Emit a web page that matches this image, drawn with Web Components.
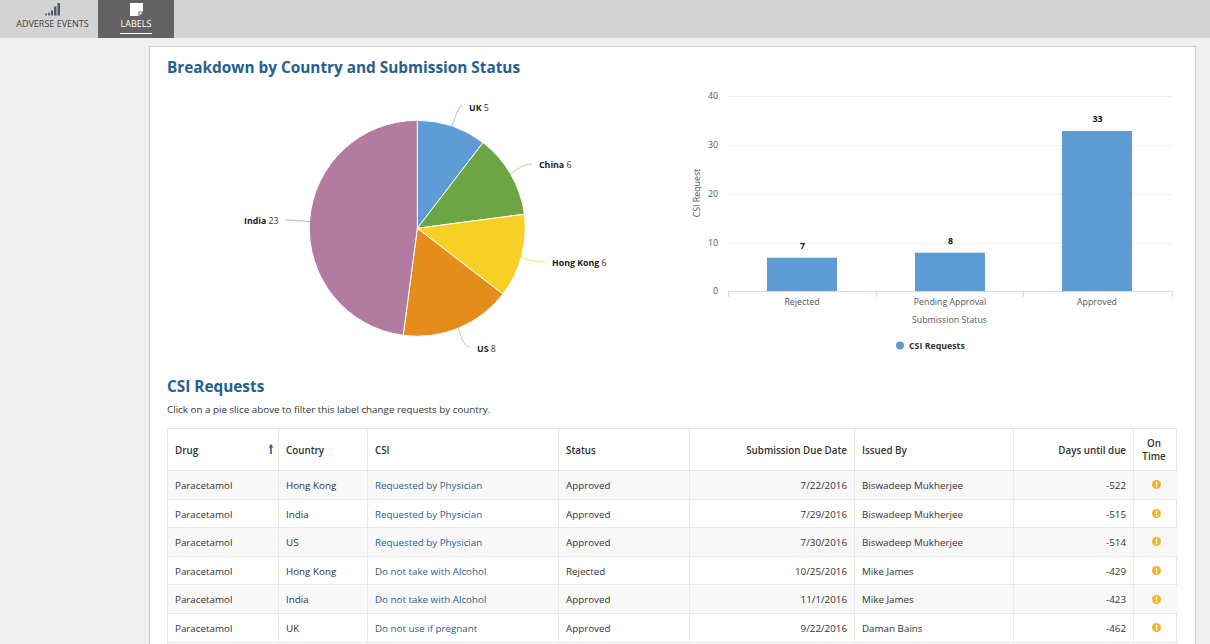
<!DOCTYPE html>
<html>
<head>
<meta charset="utf-8">
<title>CSI Requests</title>
<style>
  html, body { margin: 0; height: 644px; overflow: hidden; }
  body { background: #efefef; font-family: "Open Sans", "Liberation Sans", sans-serif; color: #333; }
</style>
</head>
<body>
<app-shell>
  <top-nav slot="nav">
    <nav-tab label="ADVERSE EVENTS" icon="bars" style="width:98px;padding-left:7px"></nav-tab>
    <nav-tab label="LABELS" icon="note" active style="width:76px"></nav-tab>
  </top-nav>
  <report-card>
    <section-title>Breakdown by Country and Submission Status</section-title>
    <chart-row>
      <pie-chart></pie-chart>
      <bar-chart></bar-chart>
    </chart-row>
    <section-title>CSI Requests</section-title>
    <p-note>Click on a pie slice above to filter this label change requests by country.</p-note>
    <csi-table></csi-table>
  </report-card>
</app-shell>

<script>
// --- tiny helper: every element gets an open shadow root with the given html ---
class Base extends HTMLElement {
  constructor() {
    super();
    this.attachShadow({ mode: 'open' });
  }
  connectedCallback() {
    this.shadowRoot.innerHTML = this.render();
  }
}

class AppShell extends Base {
  render() {
    return `<style>
      :host { display: block; }
      main { margin: 8px 14px 0 149px; }
    </style>
    <slot name="nav"></slot>
    <main><slot></slot></main>`;
  }
}

class TopNav extends Base {
  render() {
    return `<style>
      :host { display: flex; height: 38px; background: #d3d3d3; }
    </style><slot></slot>`;
  }
}

class NavTab extends Base {
  render() {
    const active = this.hasAttribute('active');
    const icons = {
      bars: `<svg width="15" height="13" viewBox="0 0 15 13">
        <rect x="0" y="10.500" width="2" height="2" fill="#666"/>
        <rect x="3" y="9.500" width="2" height="3" fill="#666"/>
        <rect x="6" y="7.500" width="2" height="5" fill="#555"/>
        <rect x="9" y="3.500" width="2.500" height="9" fill="#4a5a6a"/>
        <rect x="12.500" y="0" width="2.500" height="12.500" fill="#4a5a6a"/>
      </svg>`,
      note: `<svg width="13" height="13" viewBox="0 0 13 13">
        <path d="M0 0H13V8.500H8.500V13H0Z" fill="#fff"/>
        <path d="M9.500 12.500V9.500H12.500Z" fill="#fff"/>
      </svg>`
    };
    return `<style>
      :host { display: flex; flex-direction: column; align-items: center; height: 38px; box-sizing: border-box;
        background: ${active ? '#636363' : 'transparent'}; color: ${active ? '#fff' : '#444'}; }
      .ico { height: 13px; padding-top: 3px; display: flex; justify-content: center; }
      .lbl { display: block; font-size: 9px; line-height: 12px; margin-top: 2px; padding: 0 0 3px;
        ${active ? 'border-bottom: 1px solid #fff; padding-left: 1px; padding-right: 1px;' : ''} }
    </style>
    <div class="ico">${icons[this.getAttribute('icon')]}</div>
    <span class="lbl">${this.getAttribute('label')}</span>`;
  }
}

class ReportCard extends Base {
  render() {
    return `<style>
      :host { display: block; box-sizing: border-box; background: #fff; border: 1px solid #ccc; border-bottom: 0;
        padding: 9px 18px 0 17px; height: 598px; overflow: hidden; }
    </style><slot></slot>`;
  }
}

class SectionTitle extends Base {
  render() {
    return `<style>
      :host { display: block; font-size: 15.350px; line-height: 22px; font-weight: 700; color: #24608f; }
    </style><slot></slot>`;
  }
}

class PNote extends Base {
  render() {
    return `<style>
      :host { display: block; font-size: 9.800px; line-height: 14px; margin: 6px 0 11px; color: #333; }
    </style><slot></slot>`;
  }
}

class ChartRow extends Base {
  render() {
    return `<style>
      :host { display: flex; height: 295px; margin-top: 2px; justify-content: space-between; }
    </style><slot></slot>`;
  }
}

// Pie: origin of the svg sits at page (167,80)
class PieChart extends Base {
  render() {
    const cx = 250.3, cy = 148.3, r = 108;
    const slices = [
      { v: 5, c: '#5f9bd5' }, { v: 6, c: '#6ca644' }, { v: 6, c: '#f6d024' },
      { v: 8, c: '#e48d1a' }, { v: 23, c: '#b47ba2' }
    ];
    const total = slices.reduce((s, x) => s + x.v, 0);
    let a = -Math.PI / 2;
    const paths = slices.map(s => {
      const b = a + s.v / total * Math.PI * 2;
      const large = b - a > Math.PI ? 1 : 0;
      const d = `M${cx} ${cy}L${cx + r * Math.cos(a)} ${cy + r * Math.sin(a)}A${r} ${r} 0 ${large} 1 ${cx + r * Math.cos(b)} ${cy + r * Math.sin(b)}Z`;
      a = b;
      return `<path d="${d}" fill="${s.c}" stroke="#fff" stroke-width="1"/>`;
    }).join('');
    const labels = [
      ['UK', 5, 302, 31, 'M284.700 46C288 40 289 31 295 25', '#9dbfe0'],
      ['China', 6, 372, 88, 'M343 94C350 90 356 84 365 84', '#b5cfa0'],
      ['Hong Kong', 6, 385, 186, 'M353.700 177.700C362 180 370 182 378 182.300', '#f5dd7a'],
      ['US', 8, 310, 272, 'M291.300 248.300C294 256 296 266 303 267.300', '#ecc08a'],
      ['India', 23, 77, 144, 'M143 141.700C134 141 126 140 118 140', '#c9a9bf']
    ].map(([n, v, x, y, d, c]) => `<path d="${d}" fill="none" stroke="${c}"/>
      <text x="${x}" y="${y}"><tspan font-weight="700" fill="#222">${n}</tspan> ${v}</text>`).join('');
    return `<style>
      :host { display: block; width: 500px; height: 286px; }
      svg { display: block; font-family: "Open Sans", sans-serif; font-size: 8.800px; fill: #333; }
    </style>
    <svg width="500" height="286" viewBox="0 0 500 286">${paths}${labels}</svg>`;
  }
}

// Bars: origin of the svg sits at page (680,80)
class BarChart extends Base {
  render() {
    const x0 = 48, x1 = 492;
    const ticks = [[40, 16], [30, 65], [20, 114], [10, 163], [0, 211]];
    const grid = ticks.map(([t, y]) => `
      <line x1="${x0}" x2="${x1}" y1="${y + .5}" y2="${y + .5}" stroke="${t ? '#eef0f3' : '#d5dbe6'}"/>
      <text x="38" y="${y + 3}" text-anchor="end">${t}</text>`).join('');
    const cats = [
      ['Rejected', 122, 87, 70, 177.700, 7],
      ['Pending Approval', 270, 235, 70, 172.700, 8],
      ['Approved', 417, 382, 70, 51, 33]
    ];
    const bars = cats.map(([n, c, x, w, top, v]) => `
      <rect x="${x}" y="${top}" width="${w}" height="${211 - top}" fill="#5f9bd5"/>
      <text x="${c}" y="225" text-anchor="middle">${n}</text>
      <text x="${c + .5}" y="${top - 9}" text-anchor="middle" font-weight="700" fill="#111">${v}</text>`).join('');
    const tk = [48, 196, 343, 492].map(x => `<line x1="${x + .5}" x2="${x + .5}" y1="212" y2="217" stroke="#d5dbe6"/>`).join('');
    return `<style>
      :host { display: block; width: 498px; height: 286px; margin-right: -1px; }
      svg { display: block; font-family: "Open Sans", sans-serif; font-size: 8.800px; fill: #555; }
    </style>
    <svg width="498" height="286" viewBox="0 0 498 286">
      ${grid}${tk}${bars}
      <text x="269.500" y="243" text-anchor="middle">Submission Status</text>
      <text transform="translate(20 113) rotate(-90)" text-anchor="middle">CSI Request</text>
      <circle cx="220" cy="265.500" r="4" fill="#5f9bd5"/>
      <text x="229" y="269" font-weight="700" fill="#333">CSI Requests</text>
    </svg>`;
  }
}

class AlertDot extends Base {
  render() {
    return `<style>
      :host { display: inline-block; width: 9px; height: 9px; }
      svg { display: block; }
    </style>
    <svg width="9" height="9" viewBox="0 0 9 9">
      <circle cx="4.500" cy="4.500" r="4.500" fill="#f0b429"/>
      <rect x="3.800" y="1.700" width="1.400" height="3.600" fill="#fff"/>
      <rect x="3.800" y="6" width="1.400" height="1.300" fill="#fff"/>
    </svg>`;
  }
}

class CsiTable extends Base {
  render() {
    const widths = [111, 89, 191, 131, 165, 159, 120, 44];
    const heads = [['Drug'], ['Country'], ['CSI'], ['Status'], ['Submission Due Date', 'r'], ['Issued By'], ['Days until due', 'r'], ['On Time', 'c']];
    const rows = [
      ['Paracetamol', 'Hong Kong', 'Requested by Physician', 'Approved', '7/22/2016', 'Biswadeep Mukherjee', '-522'],
      ['Paracetamol', 'India', 'Requested by Physician', 'Approved', '7/29/2016', 'Biswadeep Mukherjee', '-515'],
      ['Paracetamol', 'US', 'Requested by Physician', 'Approved', '7/30/2016', 'Biswadeep Mukherjee', '-514'],
      ['Paracetamol', 'Hong Kong', 'Do not take with Alcohol', 'Rejected', '10/25/2016', 'Mike James', '-429'],
      ['Paracetamol', 'India', 'Do not take with Alcohol', 'Approved', '11/1/2016', 'Mike James', '-423'],
      ['Paracetamol', 'UK', 'Do not use if pregnant', 'Approved', '9/22/2016', 'Daman Bains', '-462']
    ];
    const tmpl = `grid-template-columns:${widths.map(w => w + 'px').join(' ')}`;
    const head = heads.map(([t, al], i) => `<div class="c h ${al || ''}">${t}${i === 0 ? `<svg class="sort" width="6" height="10" viewBox="0 0 6 10"><path d="M3 0L5.500 3.500H3.800V10H2.200V3.500H.5Z" fill="#24608f"/></svg>` : ''}</div>`).join('');
    const body = rows.map((r, i) => `<div class="row ${i % 2 ? '' : 'odd'}" style="${tmpl}">
      ${r.map((t, j) => `<div class="c ${j === 4 || j === 6 ? 'r' : ''} ${j === 2 ? 'lnk' : ''}">${t}</div>`).join('')}
      <div class="c m"><alert-dot></alert-dot></div></div>`).join('');
    return `<style>
      :host { display: block; width: 1010px; font-size: 9.800px; color: #333; }
      .wrap { border: solid #e6e6e6; border-width: 1px 1px 0 1px; box-sizing: border-box; }
      .row { display: grid; height: 28.600px; border-bottom: 1px solid #e8e8e8; box-sizing: border-box; margin-right: -2px; }
      .row.head { height: 42px; }
      .odd { background: #f8f8f8; }
      .stub { height: 2px; border: 0; background: #f8f8f8; }
      .c { padding: 1.600px 7px 0; display: flex; align-items: center; border-right: 1px solid #e8e8e8; box-sizing: border-box; position: relative; }
      .c:last-child { border-right: 0; }
      .r { justify-content: flex-end; text-align: right; }
      .h { font-weight: 600; color: #333; padding-top: 1px; }
      .m { justify-content: center; padding: 0; }
      .h.c:last-child { justify-content: center; text-align: center; padding: 1px 8px 0 4px; line-height: 13px; }
      .lnk { color: #2a5d8c; }
      .sort { position: absolute; right: 4px; top: 15px; }
    </style>
    <div class="wrap">
      <div class="row head" style="${tmpl}">${head}</div>
      ${body}
      <div class="row stub"></div>
    </div>`;
  }
}

customElements.define('app-shell', AppShell);
customElements.define('top-nav', TopNav);
customElements.define('nav-tab', NavTab);
customElements.define('report-card', ReportCard);
customElements.define('section-title', SectionTitle);
customElements.define('p-note', PNote);
customElements.define('chart-row', ChartRow);
customElements.define('pie-chart', PieChart);
customElements.define('bar-chart', BarChart);
customElements.define('alert-dot', AlertDot);
customElements.define('csi-table', CsiTable);
</script>
</body>
</html>
